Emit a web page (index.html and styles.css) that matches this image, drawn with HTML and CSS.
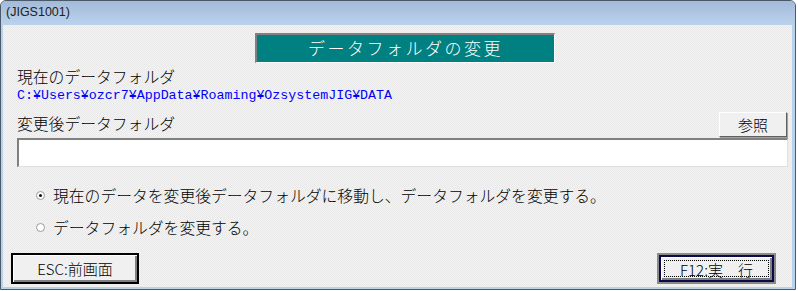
FILE: index.html
```html
<!DOCTYPE html>
<html>
<head>
  <title>JIGS1001</title>
  <link rel="stylesheet" href="styles.css">
</head>
<body>
  <div class="window">
    <div class="titlebar">(JIGS1001)</div>
    <div class="content">
      <div class="banner">データフォルダの変更</div>
      <div class="label">現在のデータフォルダ</div>
      <div class="path">C:¥Users¥ozcr7¥AppData¥Roaming¥OzsystemJIG¥DATA</div>
      <div class="row">
        <div class="label">変更後データフォルダ</div>
        <button class="browse">参照</button>
      </div>
      <div class="folder-input"></div>
      <div class="options">
        <label class="option"><span class="radio checked"></span>現在のデータを変更後データフォルダに移動し、データフォルダを変更する。</label>
        <label class="option"><span class="radio"></span>データフォルダを変更する。</label>
      </div>
      <div class="footer">
        <button class="fkey esc">ESC:前画面</button>
        <button class="fkey run"><span class="focus">F12:実　行</span></button>
      </div>
    </div>
  </div>
</body>
</html>
```

FILE: styles.css
```css
*, *::before, *::after {
  box-sizing: border-box;
}

body {
  margin: 0;
  padding: 0;
  background: #ffffff;
  font-family: "Noto Sans CJK JP", sans-serif;
  font-weight: 300;
  color: #000;
}

.window {
  width: 796px;
  height: 290px;
  border: 1px solid #4a5a6a;
  border-radius: 6px 6px 0 0;
  background: #b9d1ea;
  display: flex;
  flex-direction: column;
  overflow: hidden;
}

.titlebar {
  height: 24px;
  padding: 4px 0 0 5px;
  font-family: "Liberation Sans", sans-serif;
  font-weight: normal;
  font-size: 12.5px;
  color: #222;
  background: linear-gradient(#a3bbd9, #bad2ec);
}

.content {
  flex: 1;
  margin: 0 3px 2px 2px;
  padding: 8px 8px 0 14px;
  background: repeating-conic-gradient(#f3f3f3 0 25%, #e9e9e9 0 50%) 0 0 / 2px 2px;
}

.banner {
  width: 300px;
  height: 30px;
  margin-left: 238px;
  background: #008080;
  border-top: 2px solid #808080;
  border-left: 2px solid #808080;
  border-bottom: 1px solid #fff;
  border-right: 1px solid #fff;
  color: #fff;
  font-size: 17px;
  letter-spacing: 2.5px;
  line-height: 26px;
  text-align: center;
}

.label {
  font-size: 15.8px;
  line-height: 20px;
  margin-top: 4px;
}

.path {
  font-family: "Liberation Mono", monospace;
  font-weight: normal;
  font-size: 13.3px;
  line-height: 18px;
  color: #0000ff;
}

.row {
  display: flex;
  justify-content: space-between;
  align-items: flex-end;
  margin-top: 7px;
}

.row .label {
  margin: 0 0 3px;
}

.browse {
  width: 68px;
  height: 25px;
  margin-right: -3px;
  padding: 0;
  font-family: "Noto Sans CJK JP", sans-serif;
  font-weight: 300;
  font-size: 15px;
  background: #f0f0f0;
  border: 1px solid;
  border-color: #fff #606060 #606060 #fff;
  box-shadow: 1px 1px 0 #a0a0a0;
}

.folder-input {
  width: 771px;
  height: 29px;
  margin-top: 1px;
  background: #fff;
  border-top: 2px solid #808080;
  border-left: 2px solid #808080;
  border-bottom: 1px solid #e0e0e0;
  border-right: 1px solid #e0e0e0;
}

.options {
  padding: 18px 0 0 19px;
  display: flex;
  flex-direction: column;
  gap: 11px;
}

.option {
  display: flex;
  align-items: center;
  font-size: 15.8px;
  line-height: 21px;
}

.radio {
  width: 9px;
  height: 9px;
  margin-right: 8px;
  border-radius: 50%;
  background: #fff;
  border: 1px solid #9a9a9a;
  display: flex;
  align-items: center;
  justify-content: center;
}

.radio.checked::after {
  content: "";
  width: 3px;
  height: 3px;
  border-radius: 50%;
  background: #111;
}

.footer {
  display: flex;
  justify-content: space-between;
  margin: 15px 8px 0 -6px;
}

.fkey {
  height: 31px;
  padding: 0;
  font-family: "Noto Sans CJK JP", sans-serif;
  font-weight: 300;
  font-size: 15px;
  color: #000;
  background: #f0f0f0;
}

.esc {
  width: 128px;
  border: 2px solid #000;
  box-shadow: inset 1px 1px #fff, inset -2px -2px #808080;
}

.run {
  width: 119px;
  border: 2px solid #8a8a8a;
  box-shadow: inset 0 0 0 2px #0a0a4a, inset 3px 3px #fff, inset -4px -4px #808080;
  padding: 5px;
}

.focus {
  display: block;
  height: 100%;
  border: 1px dotted #000;
  line-height: 17px;
}
```
